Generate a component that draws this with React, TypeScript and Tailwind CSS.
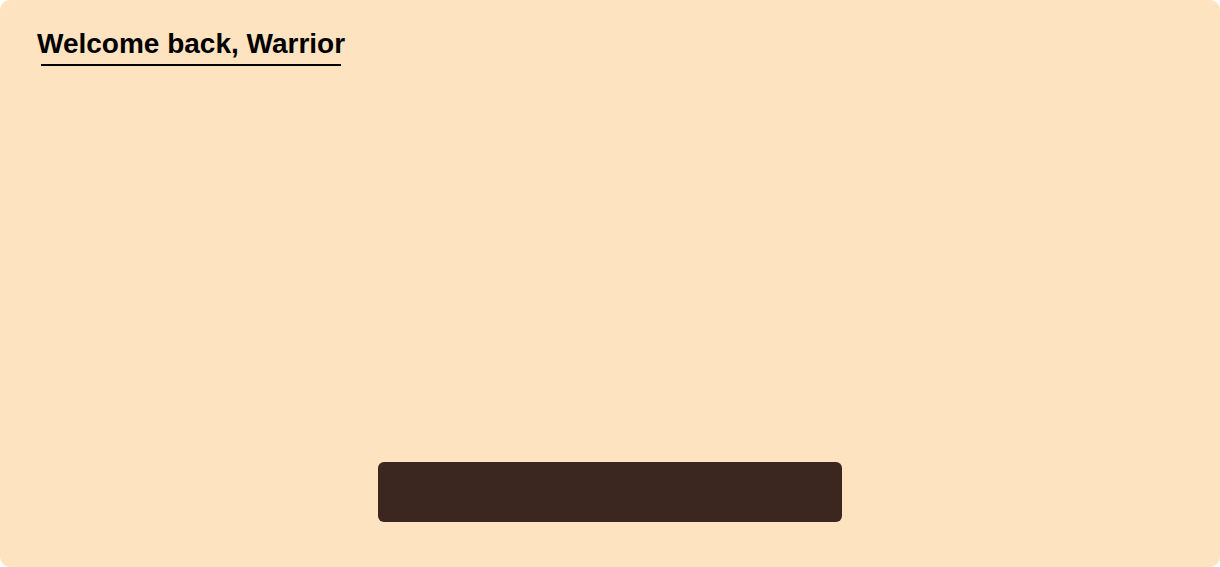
const App = () => (
  <div className="w-[1220px] h-[567px] bg-white" style={{ fontFamily: '"Liberation Sans", Arial, sans-serif' }}>
    <div className="flex flex-col h-full rounded-[10px] bg-[#fde3c0] pt-[28px] px-[37px] pb-[45px]">
      <div className="inline-flex flex-col self-start">
        <h1 className="text-[28px] leading-[32px] font-bold text-black">Welcome back, Warrior</h1>
        <div className="mx-[4px] mt-[4px] h-[2px] bg-black" />
      </div>
      <div className="flex-1" />
      <button className="self-center w-[464px] h-[60px] rounded-[6px] bg-[#3c2620]" />
    </div>
  </div>
);

export default App;
